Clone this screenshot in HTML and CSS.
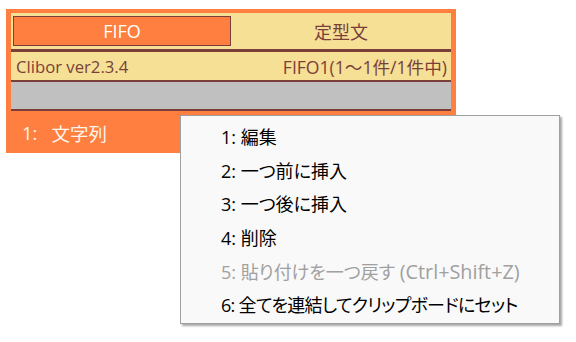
FILE: index.html
```html
<!DOCTYPE html>
<html lang="ja">
<head>
<meta charset="utf-8">
<link rel="stylesheet" href="styles.css">
</head>
<body>
<div class="panel">
  <div class="inner">
    <div class="tabs">
      <div class="tab active">FIFO</div>
      <div class="tab">定型文</div>
    </div>
    <div class="rule thick"></div>
    <div class="info">
      <span>Clibor ver2.3.4</span>
      <span class="count">FIFO1(1〜1件/1件中)</span>
    </div>
    <div class="rule"></div>
    <div class="search"></div>
    <div class="rule"></div>
  </div>
  <div class="item"><span>1:</span><span>文字列</span></div>
</div>
<ul class="menu">
  <li>1: 編集</li>
  <li>2: 一つ前に挿入</li>
  <li>3: 一つ後に挿入</li>
  <li>4: 削除</li>
  <li class="disabled">5: 貼り付けを一つ戻す <span class="shortcut">(Ctrl+Shift+Z)</span></li>
  <li class="kana">6: 全てを連結してクリップボードにセット</li>
</ul>
</body>
</html>
```
FILE: styles.css
```css
html, body {
  margin: 0;
  padding: 0;
  background: #ffffff;
  font-family: "Open Sans", "Noto Sans CJK JP", sans-serif;
}
body {
  position: relative;
  width: 576px;
  height: 342px;
  overflow: hidden;
}
.panel {
  margin: 9px 0 0 6px;
  width: 450px;
  height: 144px;
  box-sizing: border-box;
  padding: 4px 5px 0 5px;
  background: #fe7f3f;
}
.inner {
  display: flex;
  flex-direction: column;
}
.tabs {
  display: flex;
  height: 36px;
  background: #f5e096;
  box-sizing: border-box;
  padding: 3px 0 3px 2px;
}
.tab {
  display: flex;
  align-items: center;
  justify-content: center;
  font-size: 18px;
  color: #7b3f3a;
}
.tab.active {
  width: 218px;
  box-sizing: border-box;
  border: 1px solid #7b3f3a;
  background: #fe7f3f;
  color: #ffffff;
}
.tab:not(.active) {
  flex: 1;
}
.rule {
  height: 2px;
  background: #7b3f3a;
}
.rule.thick {
  height: 3px;
}
.info {
  height: 28px;
  background: #f5e096;
  display: flex;
  align-items: center;
  justify-content: space-between;
  padding: 0 4px 0 5px;
  font-size: 16.7px;
  color: #7b3f3a;
}
.info .count {
  font-size: 17.6px;
}
.search {
  height: 27px;
  background: #c0c0c0;
}
.item {
  display: flex;
  gap: 14px;
  padding: 9px 0 0 11px;
  font-size: 18.5px;
  color: #fff4ea;
}
.menu {
  position: absolute;
  left: 180px;
  top: 115px;
  width: 380px;
  height: 209px;
  box-sizing: border-box;
  margin: 0;
  padding: 5px 0 0 40px;
  list-style: none;
  background: #f9f9f9;
  border: 1px solid #a0a0a0;
  box-shadow: 2px 2px 2px rgba(0, 0, 0, 0.35);
  font-feature-settings: "palt";
}
.menu li {
  height: 33.5px;
  line-height: 33.5px;
  font-size: 18px;
  color: #000000;
  white-space: nowrap;
}
.menu li.disabled {
  color: #a0a0a0;
}
.menu li.kana {
  letter-spacing: -0.7px;
}
.shortcut {
  font-size: 19.8px;
}
```
